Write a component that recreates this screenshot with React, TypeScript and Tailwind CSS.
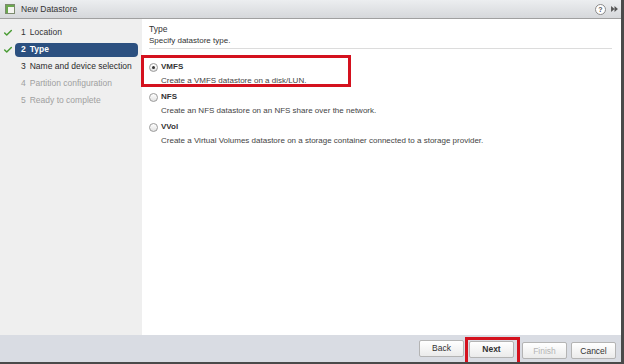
import { Check } from 'lucide-react';

const font = { fontFamily: '"Liberation Sans", Arial, sans-serif' };

interface Step {
  num: number;
  label: string;
  state: 'done' | 'active' | 'next' | 'disabled';
}

const steps: Step[] = [
  { num: 1, label: 'Location', state: 'done' },
  { num: 2, label: 'Type', state: 'active' },
  { num: 3, label: 'Name and device selection', state: 'next' },
  { num: 4, label: 'Partition configuration', state: 'disabled' },
  { num: 5, label: 'Ready to complete', state: 'disabled' },
];

const options = [
  { id: 'vmfs', label: 'VMFS', desc: 'Create a VMFS datastore on a disk/LUN.', checked: true },
  { id: 'nfs', label: 'NFS', desc: 'Create an NFS datastore on an NFS share over the network.', checked: false },
  {
    id: 'vvol',
    label: 'VVol',
    desc: 'Create a Virtual Volumes datastore on a storage container connected to a storage provider.',
    checked: false,
  },
];

const Radio = ({ checked }: { checked: boolean }) => (
  <span className="flex h-[9px] w-[9px] shrink-0 items-center justify-center rounded-full border border-[#9a9a9a] bg-gradient-to-b from-white to-[#e2e2e2]">
    {checked ? <span className="h-[3px] w-[3px] rounded-full bg-[#333]" /> : null}
  </span>
);

const StepRow = ({ step }: { step: Step }) => {
  const tone =
    step.state === 'active'
      ? 'bg-[#2c5080] font-bold text-white'
      : step.state === 'disabled'
        ? 'text-[#a0a0a0]'
        : step.state === 'next'
          ? 'text-[#2a2a2a]'
          : 'text-[#333]';
  return (
    <div className="flex h-[17px] items-center">
      <div className="flex w-[15px] justify-center">
        {step.state === 'done' || step.state === 'active' ? (
          <Check className="h-[10px] w-[10px] text-[#4a9c34]" strokeWidth={3.5} />
        ) : null}
      </div>
      <div
        className={`flex h-[14px] w-[123px] items-center gap-[4px] whitespace-nowrap rounded-[4px] pl-[6px] text-[8.5px] ${tone}`}
      >
        <span>{step.num}</span>
        <span>{step.label}</span>
      </div>
    </div>
  );
};

const Button = ({ label, disabled, bold }: { label: string; disabled?: boolean; bold?: boolean }) => (
  <button
    className={`h-[17px] w-[45px] rounded-[2px] border border-[#b4b4b4] bg-gradient-to-b from-white to-[#ebebeb] text-[8.5px] ${
      disabled ? 'text-[#b4b4b4]' : 'text-[#333]'
    } ${bold ? 'font-bold' : ''}`}
  >
    {label}
  </button>
);

export default function App() {
  return (
    <div
      style={font}
      className="flex h-[364px] w-[624px] flex-col overflow-hidden border-r-[3px] border-b-[2px] border-[#4a4a4a] bg-white"
    >
      <div className="flex h-[19px] shrink-0 items-center justify-between border-b border-[#a0a0a0] bg-gradient-to-b from-[#eceef0] to-[#d6d8db] pl-[5px] pr-[3px]">
        <div className="flex items-center gap-[6px]">
          <svg width="10" height="10" viewBox="0 0 10 10">
            <rect x="0.5" y="0.5" width="9" height="9" fill="#f4f4f0" stroke="#7b8a6d" />
            <rect x="1" y="1" width="8" height="2" fill="#6aa84f" />
            <rect x="1" y="3" width="2" height="6" fill="#6aa84f" />
          </svg>
          <span className="text-[8.5px] text-[#333]">New Datastore</span>
        </div>
        <div className="flex items-center gap-[5px]">
          <span className="flex h-[11px] w-[11px] items-center justify-center rounded-full border border-[#8a8a8a] bg-white text-[7px] font-bold leading-none text-[#555]">
            ?
          </span>
          <svg width="7" height="6" viewBox="0 0 8 7">
            <path d="M0 0 L4 3.5 L0 7 Z M4 0 L8 3.5 L4 7 Z" fill="#555" />
          </svg>
        </div>
      </div>

      <div className="flex flex-1">
        <div className="w-[142px] shrink-0 bg-[#efefef] pt-[5px]">
          {steps.map((s) => (
            <StepRow key={s.num} step={s} />
          ))}
        </div>

        <div className="flex-1 pt-[4px] pr-[9px]">
          <div className="ml-[7px] border-b border-[#dcdcdc] pb-[1px]">
            <div className="text-[8.5px] leading-[12px] text-[#333]">Type</div>
            <div className="text-[8px] leading-[12px] text-[#333]">Specify datastore type.</div>
          </div>

          <div className="mt-[6px] flex flex-col">
            {options.map((o) => (
              <div
                key={o.id}
                className={`-ml-[1px] w-[210px] border-[3px] pl-[5px] ${
                  o.checked ? 'h-[32px] -mb-[2px] border-[#d4111e]' : 'h-[30px] border-transparent'
                }`}
              >
                <div className="mt-[3px] flex h-[12px] items-center gap-[3px]">
                  <Radio checked={o.checked} />
                  <span className="text-[8px] font-bold text-[#333]">{o.label}</span>
                </div>
                <div className="mt-[3px] whitespace-nowrap pl-[12px] text-[8px] leading-[10px] text-[#444]">
                  {o.desc}
                </div>
              </div>
            ))}
          </div>
        </div>
      </div>

      <div className="flex h-[27px] shrink-0 items-center justify-end bg-[#d9dce3] pr-[5px]">
        <Button label="Back" />
        <div className="ml-[1px] -mb-[4px] flex h-[27px] items-start border-[3px] border-b-0 border-[#d4111e] pl-[1px] pr-[3px] pt-[1px]">
          <Button label="Next" bold />
        </div>
        <div className="ml-[2px]">
          <Button label="Finish" disabled />
        </div>
        <div className="ml-[4px]">
          <Button label="Cancel" />
        </div>
      </div>
    </div>
  );
}
